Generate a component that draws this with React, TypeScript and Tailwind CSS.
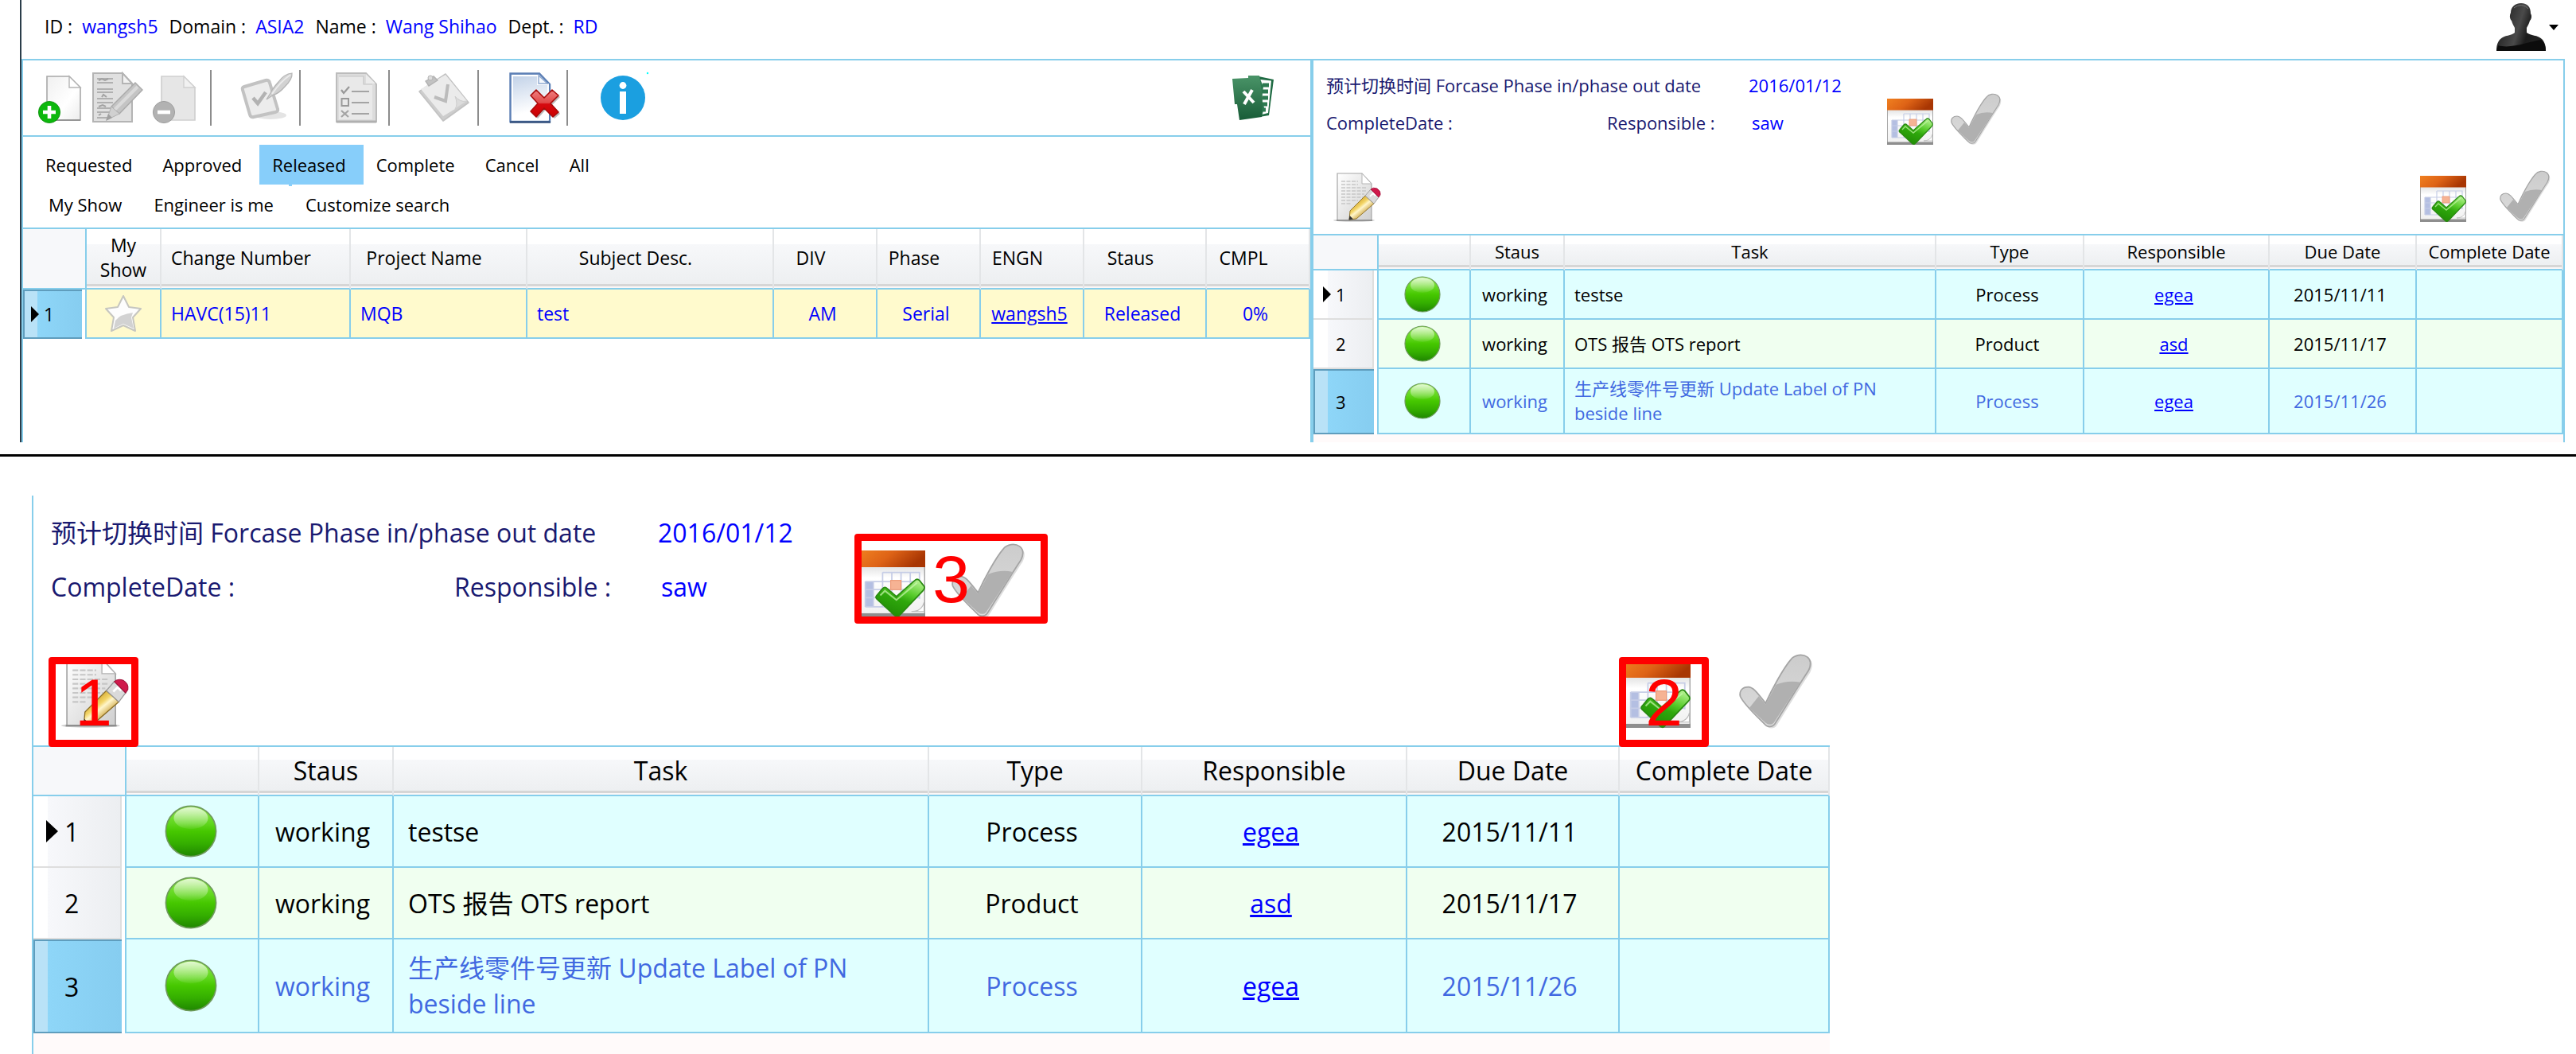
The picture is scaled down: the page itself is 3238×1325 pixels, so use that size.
import React from "react";
import { clsx } from "clsx";

/* ---------- icons ---------- */

const svgBase = "block h-full w-full overflow-visible";

function NewDocIcon() {
  return (
    <svg viewBox="0 0 64 64" className={svgBase} aria-hidden="true">
      <defs>
        <linearGradient id="nd" x1="0" y1="0" x2="1" y2="1">
          <stop offset="0" stopColor="#f0f0f0" />
          <stop offset="0.6" stopColor="#ffffff" />
          <stop offset="1" stopColor="#ececec" />
        </linearGradient>
      </defs>
      <path d="M15 5H43L57 19V60H15Z" fill="url(#nd)" stroke="#a8a8a8" strokeWidth="1.6" />
      <path d="M43 5V19H57Z" fill="#fff" stroke="#b4b4b4" strokeWidth="1.4" />
      <path d="M15 60H57" stroke="#8a8a8a" strokeWidth="1.6" />
      <circle cx="18" cy="50" r="13.6" fill="#0db80d" stroke="#078a07" strokeWidth="0.8" />
      <path d="M18 42V58M10 50H26" stroke="#fff" strokeWidth="4.6" />
    </svg>
  );
}

function EditDocGrayIcon() {
  return (
    <svg viewBox="0 0 64 64" className={svgBase} aria-hidden="true">
      <path d="M1 1H38L50 14V62H1Z" fill="#e0e0e0" stroke="#b4b4b4" strokeWidth="2" />
      <path d="M38 1V14H50Z" fill="#f2f2f2" stroke="#b4b4b4" strokeWidth="2" />
      <path
        d="M6 8H26M6 13H26M6 21H26M6 25H26M6 33H26M6 38H26M6 45H26M6 50H26M6 57H20"
        stroke="#b0b0b0"
        strokeWidth="1.8"
      />
      <path d="M8 10L12 8L16 10L20 8M12 31L14 28L18 31M8 43L13 41L17 43M8 54L11 52" stroke="#a2a2a2" strokeWidth="2" fill="none" />
      <path d="M54 13L63 22L34 52L24 43Z" fill="#c4c4c4" stroke="#aaa" strokeWidth="1.4" />
      <path d="M57 18L28 47" stroke="#dadada" strokeWidth="4" />
      <path d="M24 43L34 52L18 60Z" fill="#d0d0d0" stroke="#b0b0b0" />
      <path d="M20 52L25 57L17 61Z" fill="#a0a0a0" />
    </svg>
  );
}

function RemoveDocIcon() {
  return (
    <svg viewBox="0 0 64 64" className={svgBase} aria-hidden="true">
      <path d="M15 5H43L57 19V60H15Z" fill="#e6e6e6" stroke="#cfcfcf" strokeWidth="1.6" />
      <path d="M43 5V19H57Z" fill="#f1f1f1" stroke="#d0d0d0" strokeWidth="1.4" />
      <circle cx="18" cy="50" r="13.6" fill="#b2b2b2" stroke="#9f9f9f" strokeWidth="1" />
      <path d="M10 50H26" stroke="#fff" strokeWidth="4.6" />
    </svg>
  );
}

function CheckPenIcon() {
  return (
    <svg viewBox="0 0 64 64" className={svgBase} aria-hidden="true">
      <ellipse cx="36" cy="54" rx="20" ry="5" fill="#e4e4e4" />
      <path
        d="M3 18L30 10Q34 9 35 13L45 46Q46 49 42 50L15 56Q11 57 10 53L1 22Q0 19 3 18Z"
        fill="#ececec"
        stroke="#c2c2c2"
        strokeWidth="4"
      />
      <path d="M14 32L20 39L30 25" fill="none" stroke="#b2b2b2" strokeWidth="4.5" />
      <path d="M63 1Q53 2 46 12Q38 21 36 26L31 34L40 28Q46 27 54 18Q64 8 63 1Z" fill="#d2d2d2" stroke="#b4b4b4" strokeWidth="1.2" />
      <path d="M61 3Q48 12 38 27" stroke="#ebebeb" strokeWidth="2" fill="none" />
    </svg>
  );
}

function ChecklistIcon() {
  return (
    <svg viewBox="0 0 52 64" className={svgBase} aria-hidden="true">
      <path d="M1 1H38L51 15V62H1Z" fill="#dcdcdc" stroke="#bcbcbc" strokeWidth="2" />
      <path d="M4 5H35V15H46V59H4Z" fill="#e9e9e9" />
      <path d="M4 5H35V15H46" fill="none" stroke="#c6c6c6" strokeWidth="1.2" />
      <path d="M38 2V14H50Z" fill="#ececec" />
      <path d="M1 62H51" stroke="#b0b0b0" strokeWidth="3" />
      <path d="M7 22L10 26L17 18" fill="none" stroke="#999" strokeWidth="2.2" />
      <rect x="7.500" y="33" width="8.500" height="9" fill="none" stroke="#999" strokeWidth="2" />
      <path d="M7 48L16 56M16 48L7 56" stroke="#a4a4a4" strokeWidth="2.200" />
      <path d="M20 24H42M20 38H42M20 52H42" stroke="#a4a4a4" strokeWidth="2" />
    </svg>
  );
}

function ClipboardIcon() {
  return (
    <svg viewBox="0 0 64 64" className={svgBase} aria-hidden="true">
      <path d="M34 2L63 38L31 61L1 24Z" fill="#cdcdcd" stroke="#c2c2c2" strokeWidth="1.600" strokeLinejoin="round" />
      <path d="M34 3L61 36Q54 38 46 30Q50 44 46 46L31 55L3 21Z" fill="#ebebeb" />
      <path d="M46 30Q52 38 61 36L46 46Q50 40 46 30Z" fill="#dcdcdc" stroke="#cfcfcf" />
      <path d="M9 11L19 5L24 10L13 17Z" fill="#c2c2c2" stroke="#b2b2b2" strokeWidth="1.400" />
      <circle cx="15" cy="7" r="3" fill="#ddd" stroke="#b2b2b2" />
      <path d="M20 31L34 36L37 15" fill="none" stroke="#bbb" strokeWidth="4" />
    </svg>
  );
}

function DeleteDocIcon() {
  return (
    <svg viewBox="0 0 64 64" className={svgBase} aria-hidden="true">
      <defs>
        <linearGradient id="dd" x1="0.300" y1="0" x2="0.500" y2="1">
          <stop offset="0" stopColor="#c2d2e8" />
          <stop offset="0.800" stopColor="#ffffff" />
        </linearGradient>
        <linearGradient id="dx" x1="0" y1="0" x2="0" y2="1">
          <stop offset="0" stopColor="#f08080" />
          <stop offset="0.480" stopColor="#e04848" />
          <stop offset="0.520" stopColor="#d60a10" />
          <stop offset="1" stopColor="#cc0000" />
        </linearGradient>
      </defs>
      <path d="M1.500 1.500H38L51 15V62H1.500Z" fill="url(#dd)" stroke="#5c7fb5" strokeWidth="2.400" />
      <path d="M4 4H36V15H49V59H4Z" fill="none" stroke="#fff" strokeWidth="1.800" />
      <path d="M37 4V14H48Z" fill="#f6f9fd" stroke="#8fa9cf" strokeWidth="1.400" />
      <path d="M1 62.500H52" stroke="#35527e" strokeWidth="2.600" />
      <path d="M34 22L44 32L54 22L62 29L52 39L62 50L55 56L44 45L34 56L27 49L36 39L27 29Z" fill="#00000044" transform="translate(2 2)" />
      <path
        d="M34 22L44 32L54 22L62 29L52 39L62 50L55 56L44 45L34 56L27 49L36 39L27 29Z"
        fill="url(#dx)"
        stroke="#a80a0a"
        strokeWidth="1.600"
        strokeLinejoin="round"
      />
    </svg>
  );
}

function InfoIcon() {
  return (
    <svg viewBox="0 0 56 56" className={svgBase} aria-hidden="true">
      <circle cx="28" cy="28" r="28" fill="#1b9fe0" />
      <circle cx="28" cy="12.500" r="4.400" fill="#fff" />
      <path d="M28 20V48" stroke="#fff" strokeWidth="8" />
      <circle cx="59" cy="-3" r="1.200" fill="#00ffff" />
    </svg>
  );
}

function ExcelIcon() {
  return (
    <svg viewBox="0 0 52 56" className={svgBase} aria-hidden="true">
      <defs>
        <linearGradient id="xl" x1="0" y1="0" x2="0" y2="1">
          <stop offset="0" stopColor="#4a9468" />
          <stop offset="1" stopColor="#185c37" />
        </linearGradient>
      </defs>
      <path d="M33 1L52 5L46 50L34 52Z" fill="#1f6b43" />
      <path d="M35 5L49 6.500L45 47L37 49Z" fill="#fff" />
      <path d="M38 12H46M38 20H45M38 28H45M38 36H44M38 43H42" stroke="#2c7a50" strokeWidth="5" />
      <path d="M34 2L39 14L37 30L40 40L37 52H33Z" fill="#2c7a50" />
      <path d="M0 4L20 3V0H34L38 28L37 52L9 56L6 36L3 36Z" fill="url(#xl)" />
      <path d="M14 20L27 34M25 18L15 36" stroke="#fff" strokeWidth="4" />
    </svg>
  );
}

function PersonIcon() {
  return (
    <svg viewBox="0 0 62 60" className={svgBase} aria-hidden="true">
      <defs>
        <linearGradient id="pr" x1="0" y1="0" x2="1" y2="0.300">
          <stop offset="0" stopColor="#111" />
          <stop offset="0.550" stopColor="#4a4a4a" />
          <stop offset="0.750" stopColor="#1c1c1c" />
          <stop offset="1" stopColor="#222" />
        </linearGradient>
      </defs>
      <path
        d="M31 0C39 0 43 5 43 13C45 16 44 20 42 22C41 26 39 29 38 31V37C43 41 52 40 57 45C61 49 62 54 62 60H0C0 54 1 49 5 45C10 40 19 41 23 37V31C22 29 20 26 19 22C17 20 16 16 18 12C18 5 23 0 31 0Z"
        fill="url(#pr)"
      />
      <path d="M2 53C18 58 42 48 56 46C60 49 62 54 62 60H0Z" fill="#0c0c0c" />
      <path d="M22 6C28 1 36 2 40 7" stroke="#777" strokeWidth="1" fill="none" />
    </svg>
  );
}

function CalendarCheckIcon() {
  return (
    <svg viewBox="0 0 58 58" className={svgBase} aria-hidden="true">
      <defs>
        <linearGradient id="co" x1="0" y1="0" x2="1" y2="0.300">
          <stop offset="0" stopColor="#f08020" />
          <stop offset="0.500" stopColor="#de6316" />
          <stop offset="1" stopColor="#a83603" />
        </linearGradient>
        <linearGradient id="cb" x1="0" y1="0" x2="0" y2="1">
          <stop offset="0" stopColor="#e0e0e0" />
          <stop offset="0.250" stopColor="#ffffff" />
          <stop offset="1" stopColor="#f0f0f0" />
        </linearGradient>
        <linearGradient id="cg" x1="0.800" y1="0" x2="0.300" y2="1">
          <stop offset="0" stopColor="#b4f290" />
          <stop offset="0.350" stopColor="#58cc2c" />
          <stop offset="0.550" stopColor="#2fa80c" />
          <stop offset="1" stopColor="#1f8a04" />
        </linearGradient>
      </defs>
      <rect x="0.500" y="13" width="57" height="43" fill="url(#cb)" stroke="#a6a6a6" />
      <rect x="0" y="0" width="58" height="14.500" fill="url(#co)" />
      <rect x="0" y="54.500" width="58" height="3.500" fill="#8e8e8e" />
      <path d="M57 45Q55 53 46 53H57Z" fill="#fff" stroke="#bbb" strokeWidth="0.800" />
      <rect x="6" y="27" width="7" height="22" fill="#b4bfe2" />
      <path
        d="M21 19H53V42M21 19V49M6 27H53M6 34H53M6 41H53M6 49H40M6 27V49M13 27V49M29 19V49M37 19V49M45 19V41"
        fill="none"
        stroke="#c6cde6"
        strokeWidth="1.200"
      />
      <rect x="28" y="26" width="9" height="8" fill="#f6b394" stroke="#ee9a76" strokeWidth="0.800" />
      <path
        d="M16 39L21 33Q23 31 25 33L33 40L49 26Q51 24 53 26L57 31Q58 33 56 35L36 56Q34 59 31 56L17 43Q14 41 16 39Z"
        fill="url(#cg)"
        stroke="#2a8a12"
        strokeWidth="1.200"
      />
      <path d="M19 39L23 35L33 43L51 28" fill="none" stroke="#c9f7ae" strokeWidth="1.400" opacity="0.700" />
    </svg>
  );
}

function GrayCheckIcon() {
  return (
    <svg viewBox="0 0 62 62" className={svgBase} aria-hidden="true">
      <defs>
        <linearGradient id="gc" x1="0" y1="0" x2="0" y2="1">
          <stop offset="0" stopColor="#cccccc" />
          <stop offset="1" stopColor="#dcdcdc" />
        </linearGradient>
      </defs>
      <path
        d="M1 36C0 31 3 28 8 28C12 28 15 32 23 42C28 31 38 12 45 4C48 0 55 -1 59 2C63 5 62 10 60 14C52 26 41 44 31 60C29 63 24 63 22 60C15 53 4 43 1 36Z"
        fill="#00000022"
        transform="translate(1.500 1.500)"
      />
      <path
        d="M1 36C0 31 3 28 8 28C12 28 15 32 23 42C28 31 38 12 45 4C48 0 55 -1 59 2C63 5 62 10 60 14C52 26 41 44 31 60C29 63 24 63 22 60C15 53 4 43 1 36Z"
        fill="url(#gc)"
        stroke="#a4a4a4"
        strokeWidth="1.200"
      />
      <path
        d="M9 46L17 36L23 43L32 26Q42 22 53 24Q42 41 30 59Q27 62 23 59Q16 53 9 46Z"
        fill="#b0b0b0"
      />
    </svg>
  );
}

function EditDocIcon() {
  return (
    <svg viewBox="0 0 60 62" className={svgBase} aria-hidden="true">
      <defs>
        <linearGradient id="ed" x1="0" y1="0" x2="1" y2="1">
          <stop offset="0" stopColor="#ffffff" />
          <stop offset="1" stopColor="#cfcfcf" />
        </linearGradient>
        <linearGradient id="ep" x1="0.200" y1="0.200" x2="0.700" y2="0.800">
          <stop offset="0" stopColor="#c99a1f" />
          <stop offset="0.400" stopColor="#f3d568" />
          <stop offset="0.550" stopColor="#fff6cc" />
          <stop offset="1" stopColor="#c08f1c" />
        </linearGradient>
      </defs>
      <ellipse cx="25" cy="60" rx="26" ry="1.800" fill="#cfcfcf" />
      <path d="M4 1H35L47 14V60H4Z" fill="url(#ed)" stroke="#a6a6a6" strokeWidth="1.200" />
      <path d="M35 1V14H47Z" fill="#fff" stroke="#b4b4b4" />
      <path
        d="M9 11H30M9 15H30M9 19H40M9 23H40M9 27H38M9 31H36M9 35H30M9 39H22"
        stroke="#c6c6c6"
        strokeWidth="1.500"
        strokeDasharray="5 1.500"
      />
      <path d="M3 60H48" stroke="#888" strokeWidth="1.400" />
      <path d="M39 29L50 39L28 58L19 59L20 48Z" fill="url(#ep)" stroke="#8a6d25" strokeWidth="0.900" />
      <path d="M46 21L56 31L50 39L39 29Z" fill="#dadada" stroke="#999" strokeWidth="0.900" />
      <path d="M45 30L49 26L52 29" stroke="#fff" strokeWidth="2" fill="none" />
      <path d="M46 21Q49 18 54 20Q59 23 58 28L56 31Z" fill="#cf1a4c" stroke="#a01038" strokeWidth="0.800" />
      <path d="M19.500 54L24 58.500L18.500 59.500Z" fill="#333" />
    </svg>
  );
}

function StatusDot() {
  return (
    <svg viewBox="0 0 46 46" className={svgBase} aria-hidden="true">
      <defs>
        <linearGradient id="sd" x1="0" y1="0" x2="0" y2="1">
          <stop offset="0" stopColor="#8fe84c" />
          <stop offset="0.350" stopColor="#5fd61c" />
          <stop offset="0.500" stopColor="#46c800" />
          <stop offset="0.750" stopColor="#34ae00" />
          <stop offset="1" stopColor="#1f8600" />
        </linearGradient>
        <linearGradient id="sg" x1="0" y1="0" x2="0" y2="1">
          <stop offset="0" stopColor="#ffffff" stopOpacity="0.750" />
          <stop offset="1" stopColor="#ffffff" stopOpacity="0.050" />
        </linearGradient>
      </defs>
      <circle cx="23" cy="23" r="22" fill="url(#sd)" stroke="#6f9a5c" strokeWidth="1.200" />
      <ellipse cx="23" cy="11.500" rx="15" ry="9.500" fill="url(#sg)" />
    </svg>
  );
}

function StarIcon() {
  return (
    <svg viewBox="0 0 48 48" className={svgBase} aria-hidden="true">
      <path
        d="M24 2L31 16L46 18L36 29L39 46L24 39L9 46L12 29L2 18L17 16Z"
        fill="#fdfdfd"
        stroke="#c6c6c0"
        strokeWidth="2"
        strokeLinejoin="round"
      />
      <path d="M14 33Q20 25 36 23L34 29L37 43L24 37L12 43Z" fill="#d2d2d2" />
    </svg>
  );
}

function RowPointer() {
  return (
    <svg viewBox="0 0 10 20" className="block h-full w-full" preserveAspectRatio="none" aria-hidden="true">
      <path d="M0 0L10 10L0 20Z" fill="#000" />
    </svg>
  );
}

function IconButton({
  label,
  className,
  children,
}: {
  label: string;
  className?: string;
  children: React.ReactNode;
}) {
  return (
    <button type="button" aria-label={label} className={clsx("block shrink-0 cursor-pointer", className)}>
      {children}
    </button>
  );
}

/* ---------- shared table styling ---------- */

const headBg =
  "bg-[linear-gradient(to_bottom,#fff_0%,#fff_26%,#f7f8fa_26%,#edeff1_calc(100%-5px),#d6d6d6_calc(100%-5px),#d6d6d6_calc(100%-2px),#fbf7f7_calc(100%-2px))]";
const headCell = "border-r-2 border-b-2 border-r-[#e3e5e7] border-b-[#87ceeb] p-0 pb-0.5 font-normal";
const cornerCell = "border-r-2 border-b-2 border-[#87ceeb] bg-[#f7f8fa] p-0";
const bodyCell = "border-r-2 border-b-2 border-[#87ceeb] p-0";
const selectedBg =
  "bg-[linear-gradient(to_right,#b9e2f7_0,#b9e2f7_18px,#8ed6f8_18px,#86cdf0_100%)] shadow-[inset_2px_2px_0_#5f9dbd,inset_0_-2px_0_#5f9dbd]";
const plainBg = "bg-[linear-gradient(to_right,#fff_0,#fff_18px,#f7f8fb_18px,#eceef1_100%)]";

/* ---------- task panel ---------- */

type Task = {
  id: number;
  status: string;
  task: string;
  type: string;
  responsible: string;
  due: string;
  completed: string;
};

const tasks: Task[] = [
  { id: 1, status: "working", task: "testse", type: "Process", responsible: "egea", due: "2015/11/11", completed: "" },
  { id: 2, status: "working", task: "OTS 报告 OTS report", type: "Product", responsible: "asd", due: "2015/11/17", completed: "" },
  {
    id: 3,
    status: "working",
    task: "生产线零件号更新 Update Label of PN beside line",
    type: "Process",
    responsible: "egea",
    due: "2015/11/26",
    completed: "",
  },
];

const sizes = {
  sm: {
    text: "text-[22px] leading-[31px]",
    info: "h-[106px] pt-2 pl-4",
    infoGrid: "grid-cols-[353px_178px_174px] auto-rows-[47px]",
    cal: "size-[58px]",
    check: "size-[62px]",
    edit: "h-[62px] w-[60px]",
    groupGap: "gap-[22px]",
    bar: "h-[112px] pr-[18px] pb-[15px] pl-[26px]",
    barGap: "gap-[42px]",
    cols: ["w-[82px]", "w-[116px]", "w-[118px]", "", "w-[186px]", "w-[233px]", "w-[185px]", "w-[184px]"],
    head: "h-[44px]",
    rows: ["h-[62px]", "h-[62px]", "h-[82px]"],
    rowHead: "pl-3 gap-1.5",
    pointer: "h-5 w-[10px]",
    dot: "size-[46px]",
    dotPad: "pr-1",
    cellPad: "pl-3 pr-4",
    centerPad: "pr-1.5",
    footer: "h-[10px]",
  },
  lg: {
    text: "text-[32px] leading-[45px]",
    info: "h-[153px] pt-3 pl-[22px]",
    infoGrid: "grid-cols-[507px_256px_252px] auto-rows-[68px]",
    cal: "size-[84px]",
    check: "size-[90px]",
    edit: "h-[88px] w-[86px]",
    groupGap: "gap-[33px]",
    bar: "h-[161px] pr-6 pb-[22px] pl-9",
    barGap: "gap-[61px]",
    cols: ["w-[117px]", "w-[167px]", "w-[169px]", "", "w-[268px]", "w-[333px]", "w-[267px]", "w-[264px]"],
    head: "h-[62px]",
    rows: ["h-[90px]", "h-[90px]", "h-[118px]"],
    rowHead: "pl-4 gap-2",
    pointer: "h-7 w-[15px]",
    dot: "size-[66px]",
    dotPad: "pr-1",
    cellPad: "pl-[18px] pr-6",
    centerPad: "pr-2",
    footer: "min-h-6 flex-1",
  },
};

function Callout({ n, className }: { n: number; className: string }) {
  return (
    <span
      className={clsx(
        "pointer-events-none absolute flex h-[113px] items-center justify-center rounded-[4px] border-[9px] border-[#ff0000] font-['Liberation_Sans',sans-serif] text-[84px] leading-none text-[#ff0000]",
        className
      )}
    >
      {n}
    </span>
  );
}

function TaskPanel({ size, annotated }: { size: "sm" | "lg"; annotated?: boolean }) {
  const s = sizes[size];
  const heads = ["", "Staus", "Task", "Type", "Responsible", "Due Date", "Complete Date"];
  return (
    <div className={clsx("flex flex-1 flex-col", s.text)}>
      <div className={clsx("flex items-end", s.info)}>
        <dl className={clsx("grid self-start items-center text-[#191970]", s.infoGrid)}>
          <dt className="col-span-2 whitespace-nowrap">预计切换时间 Forcase Phase in/phase out date</dt>
          <dd className="text-[#0000ff]">2016/01/12</dd>
          <dt>CompleteDate :</dt>
          <dt>Responsible :</dt>
          <dd className="pl-1 text-[#0000ff]">saw</dd>
        </dl>
        <div className={clsx("relative flex items-end", s.groupGap)}>
          <IconButton label="Set switch date" className={s.cal}>
            <CalendarCheckIcon />
          </IconButton>
          <IconButton label="Confirm switch" className={clsx("mb-0.5", s.check)}>
            <GrayCheckIcon />
          </IconButton>
          {annotated && <Callout n={3} className="-bottom-2 -left-[5px] w-[243px]" />}
        </div>
      </div>
      <div className={clsx("flex items-end justify-between", s.bar)}>
        <div className="relative">
          <IconButton label="Edit task" className={s.edit}>
            <EditDocIcon />
          </IconButton>
          {annotated && <Callout n={1} className="-bottom-6 -left-[17px] w-[113px]" />}
        </div>
        <div className={clsx("flex items-end", s.barGap)}>
          <div className="relative">
            <IconButton label="Set due date" className={s.cal}>
              <CalendarCheckIcon />
            </IconButton>
            {annotated && <Callout n={2} className="-bottom-6 -left-[6px] w-[113px]" />}
          </div>
          <IconButton label="Complete task" className={clsx("mb-0.5", s.check)}>
            <GrayCheckIcon />
          </IconButton>
        </div>
      </div>
      <table className="w-full table-fixed border-separate border-spacing-0 border-t-2 border-[#87ceeb]">
        <colgroup>
          {s.cols.map((c, i) => (
            <col key={i} className={c} />
          ))}
        </colgroup>
        <thead>
          <tr className={s.head}>
            <td className={cornerCell} />
            {heads.map((h, i) => (
              <th key={i} scope="col" className={clsx(headCell, headBg, "whitespace-nowrap")}>
                {h}
              </th>
            ))}
          </tr>
        </thead>
        <tbody>
          {tasks.map((t, i) => {
            const selected = t.id === 3;
            return (
              <tr
                key={t.id}
                className={clsx(
                  s.rows[i],
                  i % 2 ? "bg-[#f0fff0]" : "bg-[#e0ffff]",
                  selected ? "text-[#4169e1]" : "text-black"
                )}
              >
                <th scope="row" className="h-[inherit] border-r-2 border-[#87ceeb] bg-white p-0 pr-1 font-normal text-black">
                  <div
                    className={clsx(
                      "flex h-full items-center",
                      s.rowHead,
                      selected ? selectedBg : clsx(plainBg, "border-r-2 border-b-2 border-[#dedede]")
                    )}
                  >
                    <span className={s.pointer}>{t.id === 1 && <RowPointer />}</span>
                    {t.id}
                  </div>
                </th>
                <td className={clsx(bodyCell, s.dotPad)}>
                  <div className={clsx("mx-auto", s.dot)}>
                    <StatusDot />
                  </div>
                </td>
                <td className={clsx(bodyCell, s.centerPad, "text-center")}>{t.status}</td>
                <td className={clsx(bodyCell, s.cellPad)}>{t.task}</td>
                <td className={clsx(bodyCell, s.centerPad, "text-center")}>{t.type}</td>
                <td className={clsx(bodyCell, s.centerPad, "text-center")}>
                  <a href="#responsible" className="text-[#0000ff] underline">
                    {t.responsible}
                  </a>
                </td>
                <td className={clsx(bodyCell, s.centerPad, "text-center")}>{t.due}</td>
                <td className={bodyCell}>{t.completed}</td>
              </tr>
            );
          })}
        </tbody>
      </table>
      <div className={clsx("bg-[#fffafa]", s.footer)} />
    </div>
  );
}

/* ---------- change list ---------- */

const tabs = ["Requested", "Approved", "Released", "Complete", "Cancel", "All"];
const filters = ["My Show", "Engineer is me", "Customize search"];

function Toolbar() {
  const sep = <span className="h-[70px] w-[2px] shrink-0 bg-[#8c8c8c]" />;
  return (
    <div className="flex h-24 items-center border-b-2 border-[#87ceeb] pr-[46px] pl-[15px]">
      <div className="flex w-[220px] gap-2">
        <IconButton label="New" className="size-16">
          <NewDocIcon />
        </IconButton>
        <IconButton label="Edit" className="size-16">
          <EditDocGrayIcon />
        </IconButton>
        <IconButton label="Remove" className="size-16">
          <RemoveDocIcon />
        </IconButton>
      </div>
      {sep}
      <div className="flex w-[110px] justify-end pr-2">
        <IconButton label="Approve" className="size-16">
          <CheckPenIcon />
        </IconButton>
      </div>
      {sep}
      <div className="flex w-[110px] justify-end pr-3.5">
        <IconButton label="Checklist" className="h-16 w-[52px]">
          <ChecklistIcon />
        </IconButton>
      </div>
      {sep}
      <div className="flex w-[110px] justify-end pr-2.5">
        <IconButton label="Release" className="size-16">
          <ClipboardIcon />
        </IconButton>
      </div>
      {sep}
      <div className="flex w-[110px] justify-end pr-2">
        <IconButton label="Cancel change" className="size-16">
          <DeleteDocIcon />
        </IconButton>
      </div>
      {sep}
      <IconButton label="Information" className="ml-[41px] size-14">
        <InfoIcon />
      </IconButton>
      <IconButton label="Export to Excel" className="ml-auto h-14 w-[52px]">
        <ExcelIcon />
      </IconButton>
    </div>
  );
}

function ChangeList() {
  const cols = ["w-[80px]", "w-[94px]", "w-[238px]", "w-[222px]", "", "w-[130px]", "w-[130px]", "w-[130px]", "w-[154px]", "w-[130px]"];
  const heads = ["Change Number", "Project Name", "Subject Desc.", "DIV", "Phase", "ENGN", "Staus", "CMPL"];
  const centered = clsx(bodyCell, "pr-1.5 text-center");
  return (
    <div className="border-l-2 border-[#87ceeb]">
      <Toolbar />
      <div className="border-b-2 border-[#87ceeb] pt-2.5 pb-1 pl-3 text-[22px]">
        <div className="flex" role="tablist">
          {tabs.map((t) => (
            <button
              key={t}
              type="button"
              role="tab"
              aria-selected={t === "Released"}
              className={clsx(
                "relative h-[50px] pr-[22px] pl-4",
                t === "Released" &&
                  "bg-[#87cefa] after:absolute after:top-full after:left-[37px] after:h-[2px] after:w-1 after:bg-[#87cefa]"
              )}
            >
              {t}
            </button>
          ))}
        </div>
        <div className="flex h-[50px] items-center gap-10 pl-5">
          {filters.map((f) => (
            <button key={f} type="button">
              {f}
            </button>
          ))}
        </div>
      </div>
      <table className="w-full table-fixed border-separate border-spacing-0">
        <colgroup>
          {cols.map((c, i) => (
            <col key={i} className={c} />
          ))}
        </colgroup>
        <thead>
          <tr className="h-[76px]">
            <td className={cornerCell} />
            <th scope="col" className={clsx(headCell, headBg, "px-3")}>
              My Show
            </th>
            {heads.map((h) => (
              <th key={h} scope="col" className={clsx(headCell, headBg, "pr-9 whitespace-nowrap")}>
                {h}
              </th>
            ))}
          </tr>
        </thead>
        <tbody>
          <tr className="h-[62px] bg-[#fffacd] text-[#0000ff]">
            <th scope="row" className="h-[inherit] border-r-2 border-[#87ceeb] bg-white p-0 pr-1 font-normal text-black">
              <div className={clsx("flex h-full items-center gap-1.5 pl-2.5", selectedBg)}>
                <span className="h-5 w-[10px]">
                  <RowPointer />
                </span>
                1
              </div>
            </th>
            <td className={bodyCell}>
              <button type="button" aria-label="Add to My Show" className="mx-auto block size-12">
                <StarIcon />
              </button>
            </td>
            <td className={clsx(bodyCell, "pl-3")}>HAVC(15)11</td>
            <td className={clsx(bodyCell, "pl-3")}>MQB</td>
            <td className={clsx(bodyCell, "pl-3")}>test</td>
            <td className={centered}>AM</td>
            <td className={centered}>Serial</td>
            <td className={centered}>
              <a href="#engineer" className="underline">
                wangsh5
              </a>
            </td>
            <td className={centered}>Released</td>
            <td className={centered}>0%</td>
          </tr>
        </tbody>
      </table>
    </div>
  );
}

function UserField({ label, value }: { label: string; value: string }) {
  return (
    <span className="flex gap-3">
      <span>{label} :</span>
      <span className="text-[#0000ff]">{value}</span>
    </span>
  );
}

export default function App() {
  return (
    <div className="flex min-h-screen flex-col bg-white font-['Open_Sans','Noto_Sans_CJK_SC',sans-serif] text-[23px] leading-[31px] text-black">
      <section className="mr-[14px] ml-[25px] border-l-2 border-[#2b3d4a]">
        <header className="flex h-[74px] items-start justify-between pr-2 pl-[29px]">
          <div className="flex gap-3.5 pt-[18px]">
            <UserField label="ID" value="wangsh5" />
            <UserField label="Domain" value="ASIA2" />
            <UserField label="Name" value="Wang Shihao" />
            <UserField label="Dept." value="RD" />
          </div>
          <button type="button" aria-label="Account menu" className="flex items-center gap-1 pt-1">
            <span className="block h-[60px] w-[62px]">
              <PersonIcon />
            </span>
            <svg viewBox="0 0 12 7" className="h-[7px] w-3" aria-hidden="true">
              <path d="M0 0H12L6 7Z" fill="#000" />
            </svg>
          </button>
        </header>
        <div className="grid grid-cols-[1620fr_1577fr] border-t-2 border-[#87ceeb]">
          <ChangeList />
          <div className="flex border-r-2 border-l-4 border-[#87ceeb]">
            <TaskPanel size="sm" />
          </div>
        </div>
      </section>
      <hr className="mt-[15px] h-[3px] border-0 bg-black" />
      <section className="mt-[49px] mr-10 ml-10 flex max-w-[2260px] flex-1 border-l-2 border-[#87ceeb]">
        <TaskPanel size="lg" annotated />
      </section>
    </div>
  );
}
